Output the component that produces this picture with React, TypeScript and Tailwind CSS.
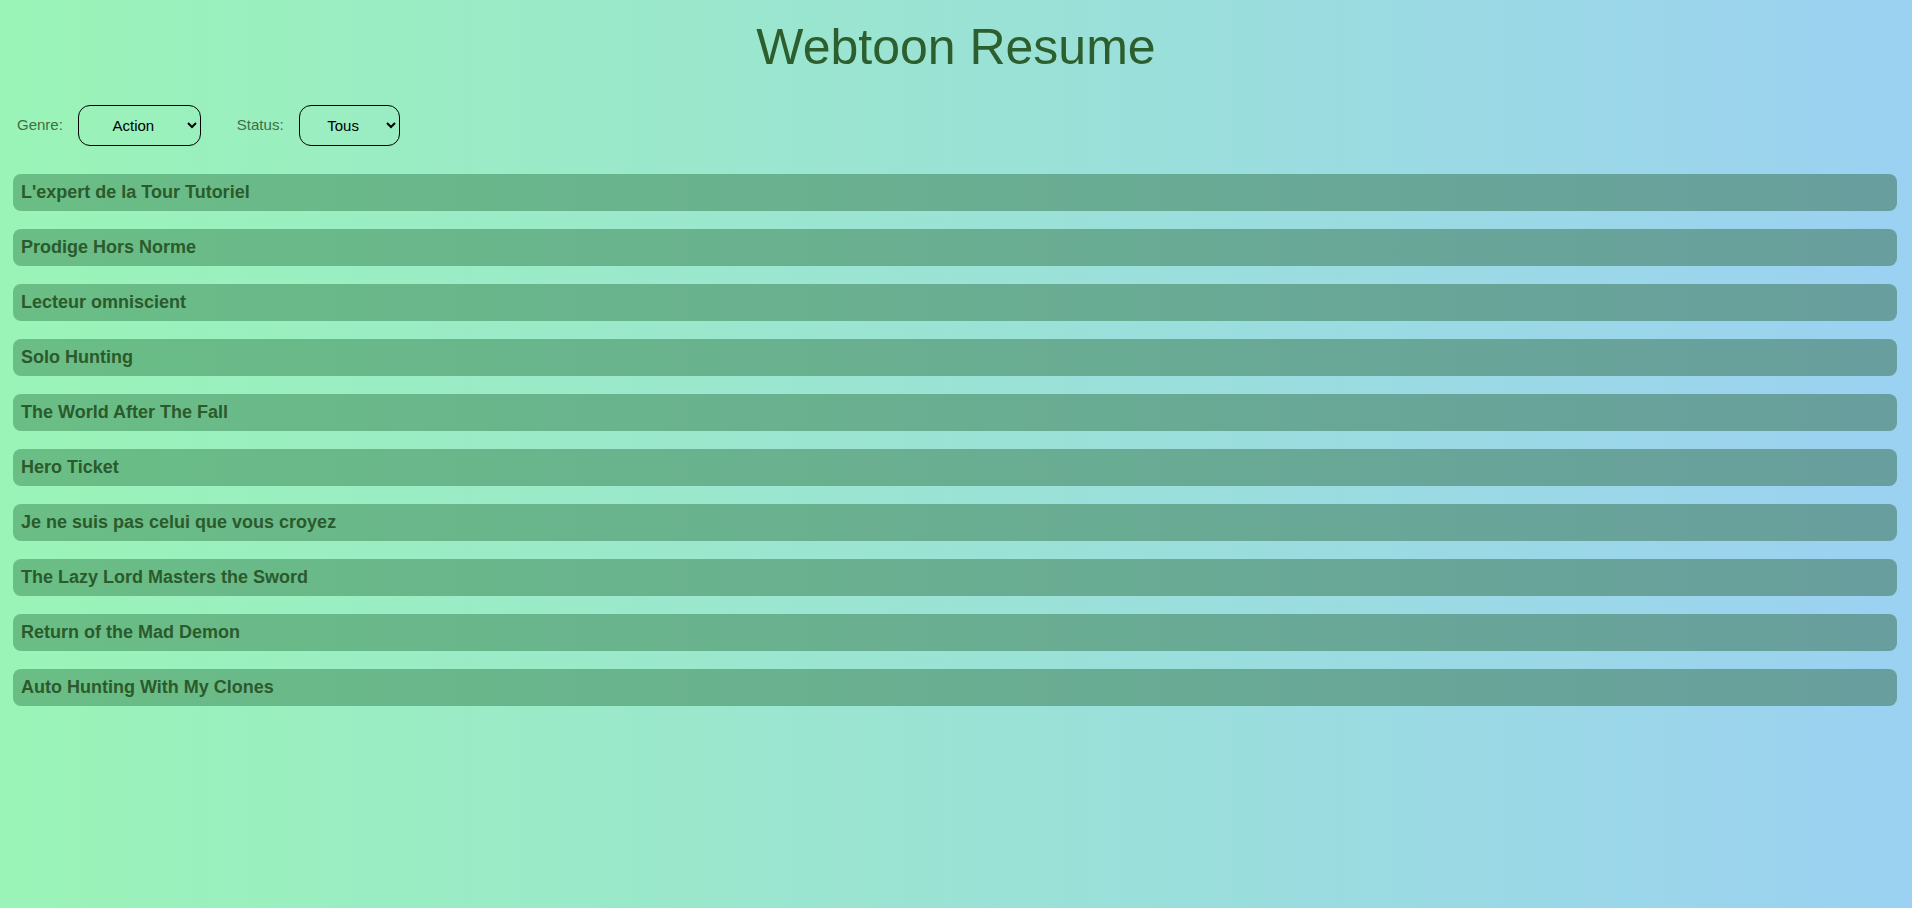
import React from "react";

const titles = [
  "L'expert de la Tour Tutoriel",
  "Prodige Hors Norme",
  "Lecteur omniscient",
  "Solo Hunting",
  "The World After The Fall",
  "Hero Ticket",
  "Je ne suis pas celui que vous croyez",
  "The Lazy Lord Masters the Sword",
  "Return of the Mad Demon",
  "Auto Hunting With My Clones",
];

export default function App() {
  return (
    <div
      className="min-h-[908px] w-full bg-[linear-gradient(to_right,#9af4b7,#9bd1f2)] text-[#2d5e2d]"
      style={{ fontFamily: '"Liberation Sans", Arial, sans-serif' }}
    >
      <h1 className="pt-[17px] text-center text-[50px] leading-[60px] font-normal text-[#2d5e2d]">
        Webtoon Resume
      </h1>
      <div className="mt-[28px] flex items-center pl-[17px] text-[15px]">
        <label className="text-[#3d6e44]">Genre:</label>
        <select
          defaultValue="Action"
          className="ml-[15px] h-[41px] w-[123px] rounded-[12px] border border-black px-[8px] text-center text-black"
        >
          <option>Action</option>
          <option>Romance</option>
          <option>Fantasy</option>
        </select>
        <label className="ml-[36px] text-[#3d6e44]">Status:</label>
        <select
          defaultValue="Tous"
          className="ml-[15px] h-[41px] w-[101px] rounded-[12px] border border-black px-[8px] text-center text-black"
        >
          <option>Tous</option>
          <option>En cours</option>
          <option>Terminé</option>
        </select>
      </div>
      <div className="mt-[28px] flex flex-col gap-[18px] pl-[13px] pr-[15px]">
        {titles.map((t) => (
          <div
            key={t}
            className="flex h-[37px] items-center rounded-[8px] bg-[linear-gradient(to_right,#6abe85,#689e9e)] pl-[8px] text-[18px] font-bold text-[#2b5a2c]"
          >
            {t}
          </div>
        ))}
      </div>
    </div>
  );
}
